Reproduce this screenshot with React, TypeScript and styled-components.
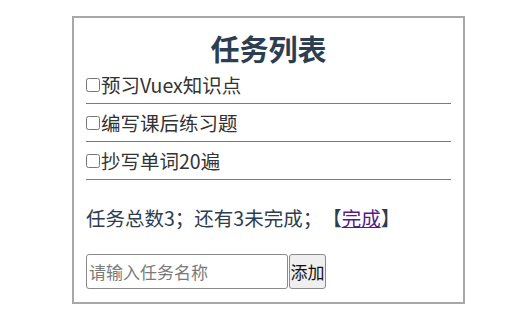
import React, { useState } from 'react';
import styled, { createGlobalStyle } from 'styled-components';

const GlobalStyle = createGlobalStyle`
  html, body {
    margin: 0;
    padding: 0;
    background: #fff;
  }
  body {
    font-family: "Noto Sans CJK SC", "Liberation Sans", sans-serif;
    text-spacing-trim: space-all;
  }
`;

const Page = styled.div`
  padding: 16px 0 0 72px;
`;

const Panel = styled.div`
  box-sizing: border-box;
  width: 393px;
  height: 288px;
  border: 2px solid #a8a8a8;
  padding: 0 12px;
  color: #2c3e50;
`;

const Title = styled.h2`
  margin: 12px 0 0;
  height: 36px;
  line-height: 36px;
  font-size: 29px;
  font-weight: 700;
  text-align: center;
  color: #2c3e50;
`;

const TaskList = styled.ul`
  list-style: none;
  margin: 0;
  padding: 0;
`;

const TaskRow = styled.li`
  display: flex;
  align-items: center;
  height: 37px;
  border-bottom: 1px solid #7a7a7a;
  font-size: 19.5px;
  color: #333;
`;

const Check = styled.input`
  box-sizing: border-box;
  width: 14px;
  height: 14px;
  margin: 0 1px 0 0;
  accent-color: #333;
`;

const Summary = styled.p`
  margin: 24px 0 0;
  height: 28px;
  line-height: 28px;
  font-size: 19.5px;
  color: #2c3e50;
`;

const DoneLink = styled.a`
  color: #551a8b;
  text-decoration: underline;
`;

const AddRow = styled.div`
  display: flex;
  margin-top: 22px;
`;

const NameInput = styled.input`
  box-sizing: border-box;
  width: 202px;
  height: 35px;
  padding: 0 2px;
  border: 1px solid #8a8a8a;
  border-radius: 3px;
  font-family: inherit;
  font-size: 17px;
  color: #333;
  &::placeholder {
    color: #7a7a7a;
  }
`;

const AddButton = styled.button`
  box-sizing: border-box;
  width: 37px;
  height: 35px;
  margin-left: 1px;
  padding: 0;
  border: 1px solid #8a8a8a;
  border-radius: 3px;
  background: #efefef;
  font-family: inherit;
  font-size: 17px;
  color: #111;
`;

const tasks = ['预习Vuex知识点', '编写课后练习题', '抄写单词20遍'];

export default function App() {
  const [name, setName] = useState('');
  return (
    <Page>
      <GlobalStyle />
      <Panel>
        <Title>任务列表</Title>
        <TaskList>
          {tasks.map((t) => (
            <TaskRow key={t}>
              <Check type="checkbox" />
              {t}
            </TaskRow>
          ))}
        </TaskList>
        <Summary>
          任务总数3；还有3未完成；【<DoneLink href="#">完成</DoneLink>】
        </Summary>
        <AddRow>
          <NameInput
            placeholder="请输入任务名称"
            value={name}
            onChange={(e) => setName(e.target.value)}
          />
          <AddButton>添加</AddButton>
        </AddRow>
      </Panel>
    </Page>
  );
}
